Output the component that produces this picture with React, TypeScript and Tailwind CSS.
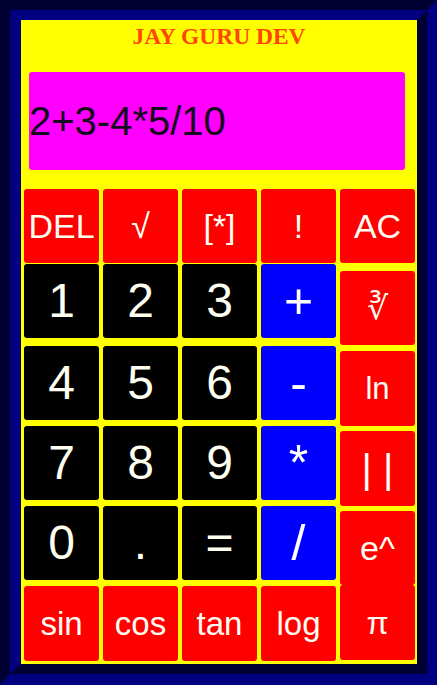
import React from "react";

type K = { label: string; cls: string; size: string; bold?: boolean };

const red = "bg-[#ff0000] text-[#fffff4]";
const black = "bg-[#000000] text-[#fffff0]";
const blue = "bg-[#0000ff] text-[#ffffff]";

function Key({ k, h }: { k: K; h: string }) {
  return (
    <div
      className={`w-[75px] ${h} rounded-[3px] flex items-center justify-center leading-none ${k.cls} ${k.size}`}
    >
      {k.label}
    </div>
  );
}

const rows: { keys: K[]; h: string; mt: string }[] = [
  {
    mt: "mt-0",
    h: "h-[74px]",
    keys: [
      { label: "DEL", cls: red, size: "text-[34px]" },
      { label: "√", cls: red, size: "text-[34px]" },
      { label: "[*]", cls: red, size: "text-[34px]" },
      { label: "!", cls: red, size: "text-[34px]" },
    ],
  },
  {
    mt: "mt-[1px]",
    h: "h-[74px]",
    keys: [
      { label: "1", cls: black, size: "text-[48px]" },
      { label: "2", cls: black, size: "text-[48px]" },
      { label: "3", cls: black, size: "text-[48px]" },
      { label: "+", cls: blue, size: "text-[50px]" },
    ],
  },
  {
    mt: "mt-[8px]",
    h: "h-[74px]",
    keys: [
      { label: "4", cls: black, size: "text-[48px]" },
      { label: "5", cls: black, size: "text-[48px]" },
      { label: "6", cls: black, size: "text-[48px]" },
      { label: "-", cls: blue, size: "text-[50px]" },
    ],
  },
  {
    mt: "mt-[6px]",
    h: "h-[74px]",
    keys: [
      { label: "7", cls: black, size: "text-[48px]" },
      { label: "8", cls: black, size: "text-[48px]" },
      { label: "9", cls: black, size: "text-[48px]" },
      { label: "*", cls: blue, size: "text-[50px]" },
    ],
  },
  {
    mt: "mt-[6px]",
    h: "h-[74px]",
    keys: [
      { label: "0", cls: black, size: "text-[48px]" },
      { label: ".", cls: black, size: "text-[48px]" },
      { label: "=", cls: black, size: "text-[48px]" },
      { label: "/", cls: blue, size: "text-[50px]" },
    ],
  },
  {
    mt: "mt-[6px]",
    h: "h-[75px]",
    keys: [
      { label: "sin", cls: red, size: "text-[33px]" },
      { label: "cos", cls: red, size: "text-[33px]" },
      { label: "tan", cls: red, size: "text-[33px]" },
      { label: "log", cls: red, size: "text-[33px]" },
    ],
  },
];

const side: { k: K; h: string; mt: string }[] = [
  { k: { label: "AC", cls: red, size: "text-[34px]" }, h: "h-[74px]", mt: "mt-0" },
  { k: { label: "∛", cls: red, size: "text-[33px]" }, h: "h-[74px]", mt: "mt-[8px]" },
  { k: { label: "ln", cls: red, size: "text-[31px]" }, h: "h-[75px]", mt: "mt-[6px]" },
  { k: { label: "| |", cls: red, size: "text-[40px]" }, h: "h-[75px]", mt: "mt-[5px]" },
  { k: { label: "e^", cls: red, size: "text-[34px]" }, h: "h-[74px]", mt: "mt-[5px]" },
  { k: { label: "π", cls: red, size: "text-[32px]" }, h: "h-[75px]", mt: "mt-0" },
];

export default function App() {
  return (
    <div className="w-[437px] h-[685px] border-[10px] border-b-[11px] border-t-[#000033] border-l-[#000033] border-r-[#000080] border-b-[#000080] font-[family-name:'Liberation_Sans',Arial,sans-serif]">
      <div className="h-full border-t-[10px] border-l-[11px] border-r-[10px] border-b-[10px] border-t-[#000080] border-l-[#000080] border-r-[#000033] border-b-[#000033] bg-[#ffff00] flex flex-col">
        <div className="h-[32px] leading-[32px] text-center text-[23.5px] font-bold text-[#ff4500] font-[family-name:'Liberation_Serif','Times_New_Roman',serif]">
          JAY GURU DEV
        </div>
        <div className="mt-[20px] ml-[8px] w-[376px] h-[98px] bg-[#ff00ff] rounded-[3px] flex items-center text-[40px] leading-none text-[#140a1e]">
          2+3-4*5/10
        </div>
        <div className="mt-[19px] ml-[3px] flex gap-[4px]">
          <div className="flex flex-col">
            {rows.map((r, i) => (
              <div key={i} className={`flex gap-[4px] ${r.mt}`}>
                {r.keys.map((k, j) => (
                  <Key key={j} k={k} h={r.h} />
                ))}
              </div>
            ))}
          </div>
          <div className="flex flex-col">
            {side.map((s, i) => (
              <div key={i} className={s.mt}>
                <Key k={s.k} h={s.h} />
              </div>
            ))}
          </div>
        </div>
      </div>
    </div>
  );
}
